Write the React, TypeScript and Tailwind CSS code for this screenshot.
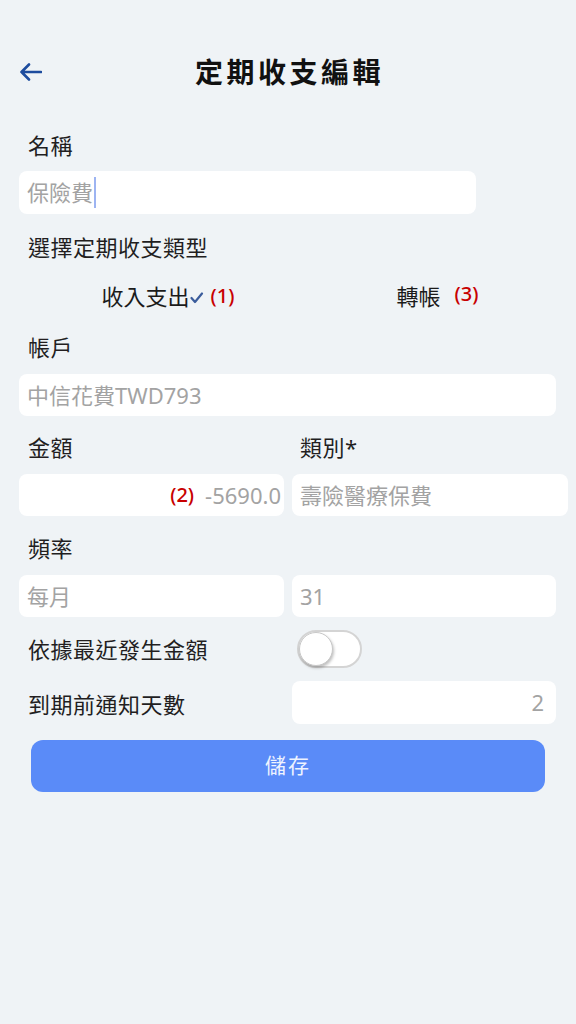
import React from "react";

const font = { fontFamily: '"Noto Sans", "Noto Sans CJK TC", sans-serif' };

function Label({ children, className = "" }: { children: React.ReactNode; className?: string }) {
  return (
    <div className={`h-[30px] flex items-center pl-[9px] text-[22px] tracking-[0.5px] text-[#221e1f] ${className}`}>
      {children}
    </div>
  );
}

function Field({ children, className = "" }: { children?: React.ReactNode; className?: string }) {
  return (
    <div className={`bg-white rounded-[8px] flex items-center px-[8px] text-[22px] text-[#a3a3a3] ${className}`}>
      {children}
    </div>
  );
}

export default function App() {
  return (
    <div className="min-h-[1024px] w-[576px] bg-[#eff3f6] px-[19px]" style={font}>
      {/* Header */}
      <div className="pt-[52px] grid grid-cols-[1fr_auto_1fr] items-center h-[92px]">
        <div className="flex items-center">
          <svg width="22" height="18" viewBox="0 0 22 18" className="ml-[1px]">
            <path d="M9 1.5 L1.5 9 L9 16.5 M1.5 9 H21" fill="none" stroke="#1d4c9e" strokeWidth="2.6" strokeLinecap="round" strokeLinejoin="round" />
          </svg>
        </div>
        <div className="text-[28px] font-bold tracking-[3.5px] text-[#111] h-[40px] flex items-center pl-[3px]">定期收支編輯</div>
        <div />
      </div>

      <Label className="mt-[38px]">名稱</Label>
      <Field className="mt-[11px] h-[43px] w-[457px]">
        <span>保險費</span>
        <span className="w-[1.5px] h-[31px] bg-[#9db4f2] ml-[1px]" />
      </Field>

      <Label className="mt-[18px]">選擇定期收支類型</Label>

      <div className="mt-[18px] h-[30px] grid grid-cols-2 text-[22px] text-[#1b1b1b]">
        <div className="flex justify-center items-center">
          <span className="relative flex items-center -ml-[2px]">
            收入支出
            <svg width="14" height="12" viewBox="0 0 14 12" className="ml-[0px] mt-[2px]">
              <path d="M1.5 6 L5 10 L12 1.5" fill="none" stroke="#3a5c9c" strokeWidth="2.2" strokeLinecap="round" strokeLinejoin="round" />
            </svg>
            <span className="absolute left-[109px] top-[1px] text-[20px] font-medium text-[#c80000] whitespace-nowrap">(1)</span>
          </span>
        </div>
        <div className="flex justify-center items-center">
          <span className="relative -ml-[8px]">
            轉帳
            <span className="absolute left-[58px] -top-[1px] text-[20px] font-medium text-[#c80000] whitespace-nowrap">(3)</span>
          </span>
        </div>
      </div>

      <Label className="mt-[22px]">帳戶</Label>
      <Field className="mt-[12px] h-[42px] w-[537px]">中信花費TWD793</Field>

      <div className="mt-[16px] grid grid-cols-[265px_1fr] gap-x-[8px]">
        <Label>金額</Label>
        <Label className="!pl-[8px]">類別*</Label>
      </div>
      <div className="mt-[12px] grid grid-cols-[265px_276px] gap-x-[8px]">
        <Field className="h-[42px] justify-end !pr-[3px]">
          <span className="text-[#c80000] mr-[11px] text-[20px] font-medium">(2)</span>
          <span>-5690.0</span>
        </Field>
        <Field className="h-[42px]">壽險醫療保費</Field>
      </div>

      <Label className="mt-[17px]">頻率</Label>
      <div className="mt-[12px] grid grid-cols-[265px_264px] gap-x-[8px]">
        <Field className="h-[42px]">每月</Field>
        <Field className="h-[42px]">31</Field>
      </div>

      <div className="mt-[13px] grid grid-cols-[265px_264px] gap-x-[8px] items-center h-[38px]">
        <Label>依據最近發生金額</Label>
        <div className="pl-[5px]">
          <div className="w-[65px] h-[38px] rounded-full border-[2px] border-[#d4d4d4] bg-white flex items-center">
            <div className="w-[34px] h-[34px] rounded-full bg-white border border-[#c8c8c8] shadow-[1px_2px_3px_rgba(0,0,0,0.25)]" />
          </div>
        </div>
      </div>

      <div className="mt-[13px] grid grid-cols-[265px_264px] gap-x-[8px] items-center">
        <Label className="mt-[3px]">到期前通知天數</Label>
        <Field className="h-[43px] justify-end !pr-[12px]">2</Field>
      </div>

      <button className="mt-[16px] mx-[12px] w-[514px] h-[52px] rounded-[12px] bg-[#5a8bf8] text-[#eef3ff] text-[21px] tracking-[2px] flex items-center justify-center">
        儲存
      </button>
    </div>
  );
}
